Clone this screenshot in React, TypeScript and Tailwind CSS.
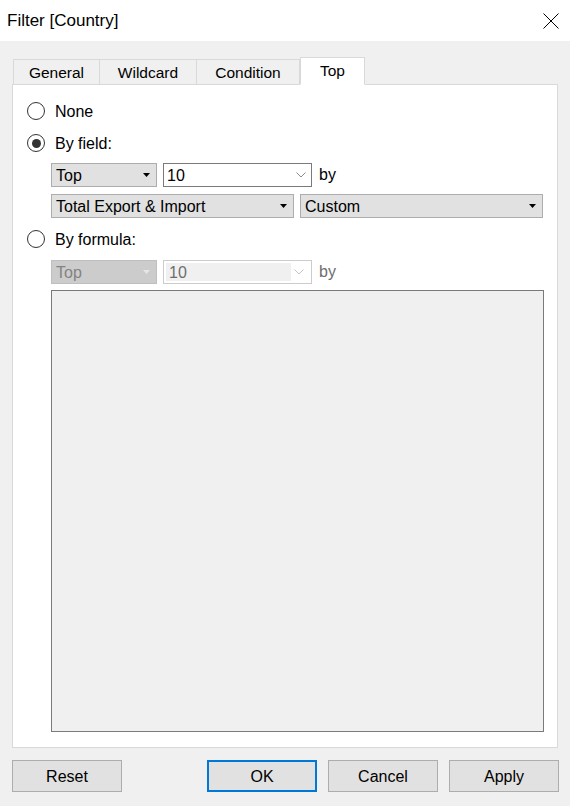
import React from 'react';

const font = { fontFamily: '"Liberation Sans", Arial, sans-serif' };

const Radio = ({ checked, label }: { checked?: boolean; label: string }) => (
    <div className="flex items-center h-[24px] pl-[14px] gap-[10px]">
        <span className="w-[18px] h-[18px] rounded-full border border-[#333] bg-white flex items-center justify-center">
            {checked && <span className="w-[9px] h-[9px] rounded-full bg-[#333]" />}
        </span>
        <span className="text-[16px] text-black pt-[1px]">{label}</span>
    </div>
);

const Caret = ({ color }: { color: string }) => (
    <svg width="7" height="4" viewBox="0 0 7 4" className="shrink-0">
        <polygon points="0,0 7,0 3.5,4" fill={color} />
    </svg>
);

const Chevron = ({ color }: { color: string }) => (
    <svg width="10" height="6" viewBox="0 0 10 6" className="shrink-0">
        <polyline points="0.5,0.5 5,5 9.5,0.5" fill="none" stroke={color} strokeWidth="1" />
    </svg>
);

const DropList = ({ value, width, disabled }: { value: string; width: string; disabled?: boolean }) => (
    <div
        className={`${width} h-[24px] flex items-center justify-between pl-[4px] pr-[6px] border ${
            disabled ? 'bg-[#cccccc] border-[#bfbfbf] text-[#838383]' : 'bg-[#e1e1e1] border-[#adadad] text-black'
        }`}
    >
        <span className="text-[16px] pt-[1px]">{value}</span>
        <Caret color={disabled ? '#e6e6e6' : '#000'} />
    </div>
);

const Combo = ({ value, disabled }: { value: string; disabled?: boolean }) => (
    <div
        className={`w-[149px] h-[24px] flex items-center border ${
            disabled ? 'border-[#cccccc] bg-white p-[2px]' : 'border-[#7a7a7a] bg-white'
        }`}
    >
        <div className={`flex-1 h-full flex items-center pl-[3px] ${disabled ? 'bg-[#f0f0f0] text-[#6d6d6d]' : 'text-black'}`}>
            <span className="text-[16px] pt-[1px]">{value}</span>
        </div>
        <div className="w-[18px] flex items-center justify-center pr-[2px]">
            <Chevron color={disabled ? '#c4c4c4' : '#8a8a8a'} />
        </div>
    </div>
);

const Tab = ({ label, width, active }: { label: string; width: string; active?: boolean }) => (
    <div
        className={`${width} flex items-center justify-center border border-[#d9d9d9] text-[15.5px] text-black ${
            active ? 'h-[28px] bg-white border-b-white -mb-[1px] z-10 pb-[1px]' : 'h-[25px] bg-[#f0f0f0] -ml-[1px] border-b-0 pt-[2px]'
        }`}
    >
        {label}
    </div>
);

const Button = ({ label, primary }: { label: string; primary?: boolean }) => (
    <button
        className={`w-[110px] h-[32px] bg-[#e1e1e1] text-[16px] text-black pt-[1px] ${
            primary ? 'border-2 border-[#0078d7]' : 'border border-[#adadad]'
        }`}
    >
        {label}
    </button>
);

export default function App() {
    return (
        <div className="w-[570px] h-[806px] bg-[#f0f0f0] flex flex-col" style={font}>
            {/* title bar */}
            <div className="h-[41px] bg-white flex items-center justify-between pl-[7px] pr-[11px] shrink-0">
                <span className="text-[17px] text-black">Filter [Country]</span>
                <svg width="16" height="16" viewBox="0 0 16 16">
                    <path d="M0.5 0.5 L15.5 15.5 M15.5 0.5 L0.5 15.5" stroke="#000" strokeWidth="1" />
                </svg>
            </div>

            <div className="pl-[12px] pt-[16px] flex flex-col">
                {/* tabs */}
                <div className="flex items-end pl-[2px] relative">
                    <Tab label="General" width="w-[87px]" />
                    <Tab label="Wildcard" width="w-[98px]" />
                    <Tab label="Condition" width="w-[104px]" />
                    <Tab label="Top" width="w-[65px]" active />
                </div>

                {/* panel */}
                <div className="w-[546px] h-[664px] bg-white border border-[#d9d9d9] flex flex-col pt-[14px]">
                    <Radio label="None" />
                    <div className="mt-[8px]">
                        <Radio label="By field:" checked />
                    </div>
                    <div className="mt-[8px] pl-[38px] flex items-center gap-[6px]">
                        <DropList value="Top" width="w-[106px]" />
                        <Combo value="10" />
                        <span className="text-[16px] text-black ml-[1px]">by</span>
                    </div>
                    <div className="mt-[7px] pl-[38px] flex items-center gap-[6px]">
                        <DropList value="Total Export & Import" width="w-[243px]" />
                        <DropList value="Custom" width="w-[243px]" />
                    </div>
                    <div className="mt-[9px]">
                        <Radio label="By formula:" />
                    </div>
                    <div className="mt-[9px] pl-[38px] flex items-center gap-[6px]">
                        <DropList value="Top" width="w-[106px]" disabled />
                        <Combo value="10" disabled />
                        <span className="text-[16px] text-[#6d6d6d] ml-[1px]">by</span>
                    </div>
                    <div className="mt-[6px] ml-[38px] w-[493px] h-[442px] bg-[#f0f0f0] border border-[#7a7a7a]" />
                </div>

                {/* buttons */}
                <div className="mt-[12px] w-[547px] flex items-center">
                    <Button label="Reset" />
                    <div className="ml-auto flex gap-[11px]">
                        <Button label="OK" primary />
                        <Button label="Cancel" />
                        <Button label="Apply" />
                    </div>
                </div>
            </div>
        </div>
    );
}
